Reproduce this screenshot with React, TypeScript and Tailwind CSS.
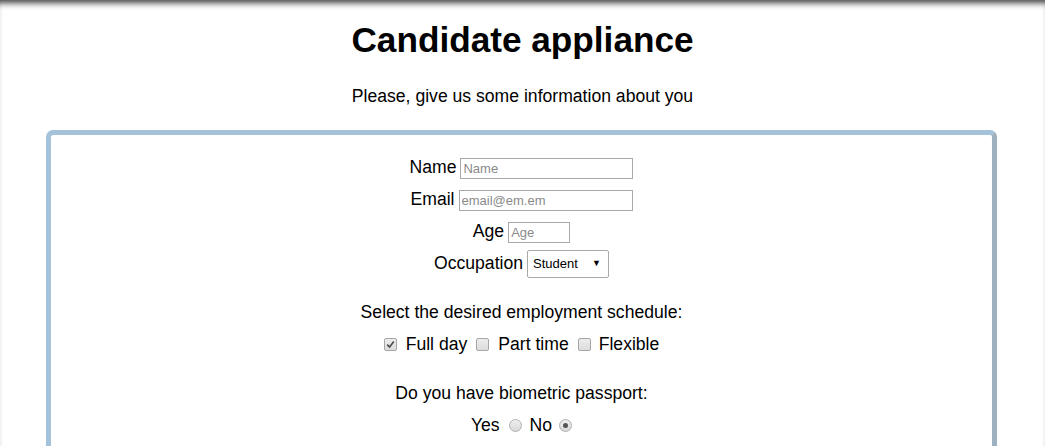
import type { ReactNode } from 'react';

function Box({ checked }: { checked?: boolean }) {
  return (
    <span className="flex h-[13px] w-[13px] items-center justify-center rounded-[2px] border border-[#a6a6a6] bg-gradient-to-b from-[#ededed] to-[#dcdcdc]">
      {checked && (
        <svg width="9" height="9" viewBox="0 0 9 9">
          <path d="M1.2 4.6 L3.6 7 L7.8 1.6" fill="none" stroke="#4a4a4a" strokeWidth="1.6" />
        </svg>
      )}
    </span>
  );
}

function Radio({ checked }: { checked?: boolean }) {
  return (
    <span className="flex h-[13px] w-[13px] items-center justify-center rounded-full border border-[#b0b0b0] bg-gradient-to-b from-[#efefef] to-[#d9d9d9]">
      {checked && <span className="h-[5px] w-[5px] rounded-full bg-[#555]" />}
    </span>
  );
}

function Row({ children, className = '' }: { children: ReactNode; className?: string }) {
  return <div className={`flex h-[32px] items-center justify-center ${className}`}>{children}</div>;
}

function Field({ label, placeholder, width }: { label: string; placeholder: string; width: string }) {
  return (
    <Row className="gap-[4px]">
      <span className="-translate-y-[1px]">{label}</span>
      <input
        type="text"
        placeholder={placeholder}
        className={`h-[21px] ${width} border border-[#a9a9a9] px-[2px] text-[13px] text-black outline-none placeholder:text-[#8a8a8a]`}
      />
    </Row>
  );
}

export default function App() {
  return (
    <div
      className="min-h-[446px] bg-white text-black shadow-[inset_0_7px_6px_-4px_rgba(0,0,0,0.75)]"
      style={{ fontFamily: '"Liberation Sans", Arial, sans-serif' }}
    >
      <h1 className="pt-[20px] text-center text-[35.2px] font-bold leading-[40px]">Candidate appliance</h1>
      <p className="mt-[24px] text-center text-[17.6px] leading-[24px]">Please, give us some information about you</p>

      <div className="ml-[46px] mr-[48px] mt-[22px] h-[330px] rounded-t-[7px] border-[5px] border-b-0 border-[#a4c3da] border-r-[#9db1c1] text-[17.6px]">
        <div className="pt-[17px]">
          <Field label="Name" placeholder="Name" width="w-[173px]" />
          <Field label="Email" placeholder="email@em.em" width="w-[174px]" />
          <Field label="Age" placeholder="Age" width="w-[62px]" />
          <Row className="gap-[4px]">
            <span className="-translate-y-[1px]">Occupation</span>
            <div className="flex h-[28px] w-[82px] items-center justify-between rounded-[2px] border border-[#a9a9a9] pl-[5px] pr-[7px] text-[13px]">
              <span>Student</span>
              <span className="text-[9px]">▼</span>
            </div>
          </Row>

          <Row className="mt-[16px]">Select the desired employment schedule:</Row>
          <Row>
            <Box checked />
            <span className="ml-[9px] mr-[9px]">Full day</span>
            <Box />
            <span className="ml-[9px] mr-[9px]">Part time</span>
            <Box />
            <span className="ml-[8px]">Flexible</span>
          </Row>

          <Row className="mt-[17px]">Do you have biometric passport:</Row>
          <Row>
            <span className="mr-[9px]">Yes</span>
            <Radio />
            <span className="ml-[8px] mr-[7px]">No</span>
            <Radio checked />
          </Row>
        </div>
      </div>
    </div>
  );
}
